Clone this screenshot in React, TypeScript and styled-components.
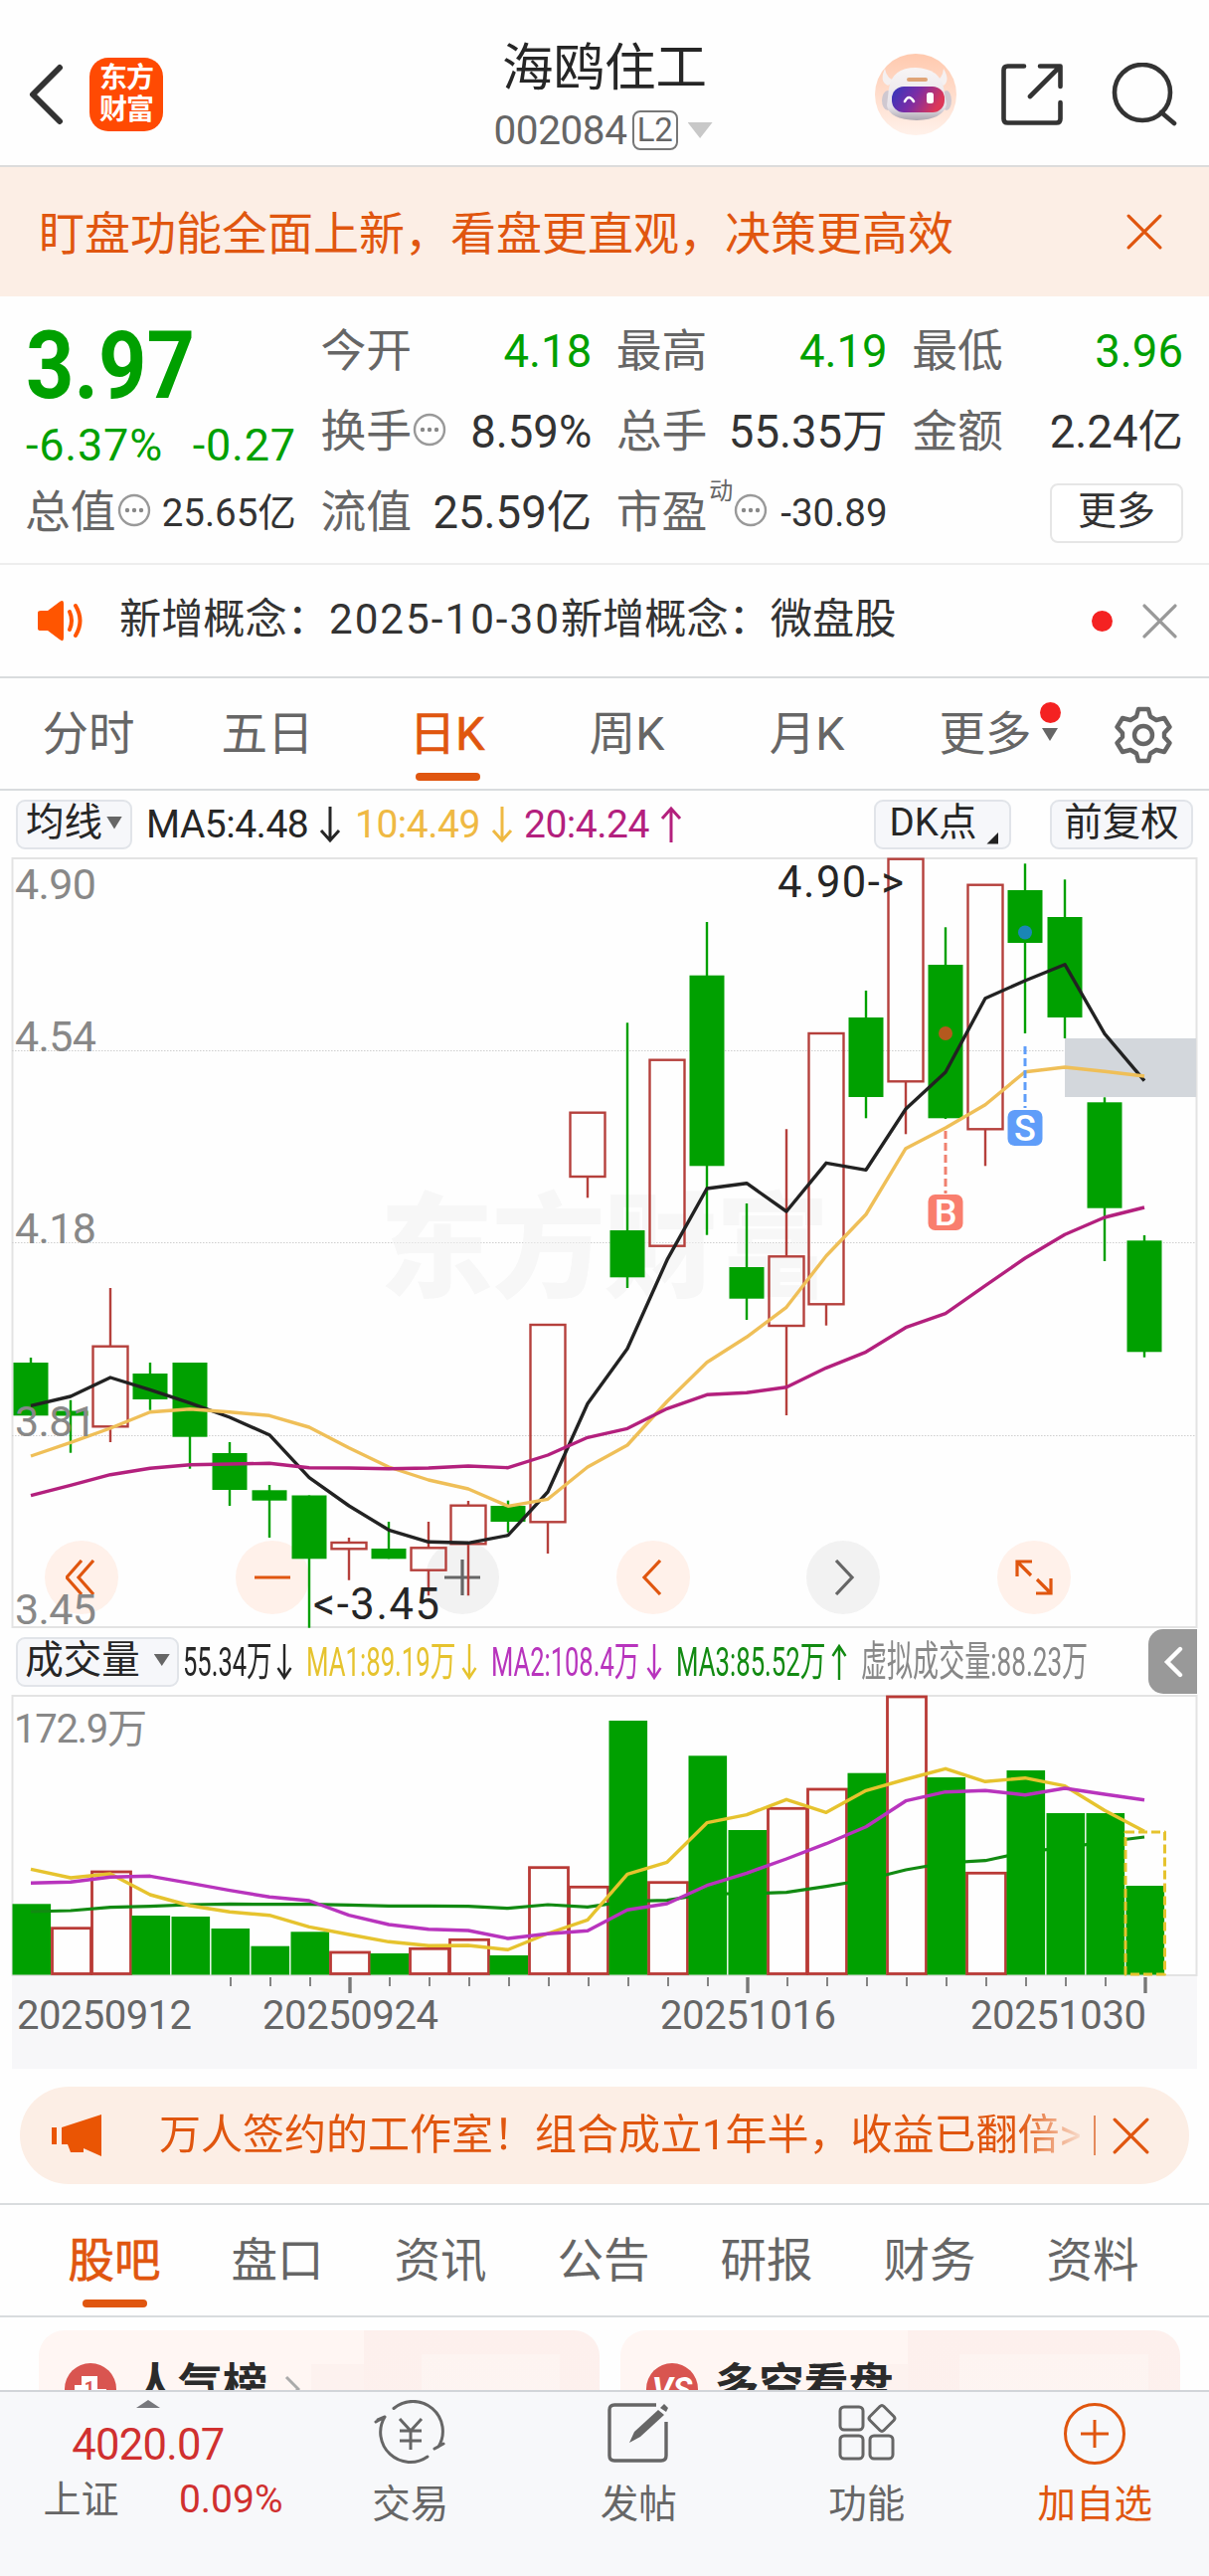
import React from 'react';
import styled, { createGlobalStyle, css } from 'styled-components';

const ORANGE = '#e0560f';
const GREEN = '#00a000';
const RED = '#b5403c';
const FONT = `Roboto, "Noto Sans CJK SC", sans-serif`;

const GlobalStyle = createGlobalStyle`
  *, *::before, *::after { box-sizing: border-box; }
  body { margin: 0; background: #fff; }
`;

const Page = styled.div`
  width: 1216px;
  height: 2590px;
  overflow: hidden;
  display: flex;
  flex-direction: column;
  background: #fefefe;
  font-family: ${FONT};
  color: #333;
  white-space: nowrap;
  > * { flex-shrink: 0; }
`;

/* ---------- header ---------- */
const Header = styled.header`
  height: 168px;
  display: grid;
  grid-template-columns: 400px 416px 400px;
  border-bottom: 2px solid #dcdcdc;
`;
const HeaderLeft = styled.div`
  display: flex;
  align-items: center;
  gap: 26px;
  padding: 24px 0 0 28px;
`;
const Logo = styled.div`
  width: 74px;
  height: 74px;
  border-radius: 19px;
  background: #ff4a03;
  color: #fff;
  display: flex;
  flex-direction: column;
  align-items: center;
  justify-content: center;
  font-size: 28px;
  font-weight: 700;
  line-height: 32px;
  letter-spacing: -1px;
`;
const HeaderTitle = styled.div`
  display: flex;
  flex-direction: column;
  align-items: center;
  padding-top: 38px;
`;
const StockName = styled.div`
  font-size: 51.5px;
  line-height: 62px;
  color: #262626;
`;
const CodeRow = styled.div`
  display: flex;
  align-items: center;
  height: 62px;
  font-size: 40.5px;
  letter-spacing: -0.4px;
  margin-left: -3px;
  color: #666;
`;
const LevelTag = styled.span`
  width: 46px;
  height: 40px;
  margin: 0 10px 0 5px;
  border: 2px solid #777;
  border-radius: 8px;
  font-size: 33px;
  line-height: 36px;
  text-align: center;
`;
const HeaderRight = styled.div`
  display: flex;
  align-items: center;
  justify-content: flex-end;
  padding: 24px 32px 0 0;
`;
const Triangle = styled.span<{ $w: number; $h: number; $color: string; $up?: boolean }>`
  display: inline-block;
  width: ${(p) => p.$w}px;
  height: ${(p) => p.$h}px;
  background: ${(p) => p.$color};
  clip-path: ${(p) => (p.$up ? 'polygon(50% 0, 100% 100%, 0 100%)' : 'polygon(0 0, 100% 0, 50% 100%)')};
`;

/* ---------- promo banner ---------- */
const Banner = styled.div`
  height: 130px;
  display: flex;
  align-items: center;
  justify-content: space-between;
  padding: 0 47px 0 39px;
  background: #fceee5;
  color: ${ORANGE};
  font-size: 46px;
  > span { padding-bottom: 4px; }
`;

/* ---------- quote ---------- */
const Quote = styled.section`
  height: 270px;
  padding: 15px 26px 0 28px;
  display: grid;
  grid-template-columns: repeat(4, 1fr);
  grid-template-rows: repeat(3, 81px);
  column-gap: 27.5px;
  border-bottom: 2px solid #ededed;
`;
const PriceBlock = styled.div`
  grid-row: span 2;
  margin-left: -2px;
  color: ${GREEN};
`;
const Price = styled.div`
  height: 107px;
  line-height: 109px;
  font-size: 95px;
  font-weight: 700;
  transform: scaleX(0.89);
  transform-origin: left;
`;
const Change = styled.div`
  display: flex;
  justify-content: space-between;
  height: 56px;
  line-height: 56px;
  font-size: 45px;
  letter-spacing: 0.8px;
`;
const Cell = styled.div`
  display: flex;
  align-items: center;
  height: 81px;
  line-height: 60px;
`;
const CellLabel = styled.span`
  margin-left: -3px;
  font-size: 45.8px;
  color: #666;
`;
const Sup = styled.sup`
  align-self: flex-start;
  margin: 3px 0 0 2px;
  font-size: 24px;
  line-height: 32px;
  color: #666;
`;
const CellValue = styled.span<{ $tone?: string; $small?: boolean }>`
  margin-left: auto;
  font-size: ${(p) => (p.$small ? 38.5 : 45.5)}px;
  color: ${(p) => p.$tone || '#333'};
`;
const MoreButton = styled.button`
  margin: 0 0 0 auto;
  padding: 0 0 4px;
  width: 134px;
  height: 60px;
  border: 2px solid #e6e6e6;
  border-radius: 8px;
  background: #fff;
  font: 39px ${FONT};
  line-height: 50px;
  color: #333;
`;

/* ---------- news strip ---------- */
const News = styled.div`
  height: 114px;
  display: flex;
  align-items: center;
  padding: 0 32px 0 36px;
  border-bottom: 2px solid #d9dcde;
`;
const NewsText = styled.div`
  flex: 1;
  margin-left: 34px;
  font-size: 42.2px;
  line-height: 60px;
  padding-bottom: 2px;
`;
const DateText = styled.span`
  letter-spacing: 2px;
`;
const Dot = styled.i<{ $size: number; $gap?: number }>`
  width: ${(p) => p.$size}px;
  height: ${(p) => p.$size}px;
  margin-right: ${(p) => p.$gap || 0}px;
  border-radius: 50%;
  background: #f42222;
`;

/* ---------- tabs ---------- */
const Tabs = styled.nav<{ $pad: number; $topLine?: boolean }>`
  height: ${(p) => (p.$topLine ? 115 : 113)}px;
  display: flex;
  padding: 0 ${(p) => p.$pad}px;
  border-top: ${(p) => (p.$topLine ? '2px solid #d9dcde' : '0')};
  border-bottom: 2px solid #d9dcde;
`;
const Tab = styled.div<{ $w: number; $active?: boolean }>`
  position: relative;
  width: ${(p) => p.$w}px;
  height: 111px;
  line-height: 111px;
  padding: 1px 2px 0 0;
  text-align: center;
  font-size: 46.5px;
  color: ${(p) => (p.$active ? ORANGE : '#666')};
  ${(p) =>
    p.$active &&
    css`
      -webkit-text-stroke: 0.7px ${ORANGE};
      &::after {
        content: '';
        position: absolute;
        left: calc(50% - 33px);
        bottom: 8px;
        width: 65px;
        height: 8px;
        border-radius: 4px;
        background: ${ORANGE};
      }
    `}
`;
const TabBadge = styled.span`
  position: absolute;
  left: 142px;
  top: 24px;
  width: 22px;
  display: flex;
  flex-direction: column;
  align-items: center;
  gap: 5px;
`;
const TabIcon = styled.div`
  flex: 1;
  display: flex;
  align-items: center;
  padding: 2px 0 0 40px;
`;

/* ---------- indicator toolbars ---------- */
const ToolRow = styled.div<{ $h: number }>`
  height: ${(p) => p.$h}px;
  display: flex;
  align-items: center;
  padding: 0 16px 0 16px;
`;
const Chip = styled.button<{ $w: number; $mr?: number; $gap?: number }>`
  display: flex;
  align-items: center;
  gap: ${(p) => p.$gap ?? 4}px;
  width: ${(p) => p.$w}px;
  height: 50px;
  margin: 0 ${(p) => p.$mr || 0}px 0 0;
  padding: 0 0 3px;
  justify-content: center;
  border: 2px solid #e1e4e9;
  border-radius: 9px;
  background: #f6f7fa;
  font: 38.5px/44px ${FONT};
  color: #262626;
`;
const CornerMark = styled.i`
  align-self: flex-end;
  width: 12px;
  height: 12px;
  margin: 0 -3px 0 6px;
  background: #222;
  clip-path: polygon(100% 0, 100% 100%, 0 100%);
`;
const MaItem = styled.div<{ $w: number; $color: string }>`
  width: ${(p) => p.$w}px;
  display: flex;
  align-items: center;
  gap: 11px;
  font-size: 39px;
  letter-spacing: -0.5px;
  color: ${(p) => p.$color};
`;
const Spacer = styled.div`
  flex: 1;
`;
const VolItem = styled.div<{ $w: number; $text: number; $color: string }>`
  width: ${(p) => p.$w}px;
  display: grid;
  grid-template-columns: ${(p) => p.$text}px 18px;
  column-gap: 6px;
  align-items: center;
  color: ${(p) => p.$color};
`;
const Narrow = styled.span<{ $k?: number }>`
  font-size: 41.5px;
  line-height: 50px;
  transform: scaleX(${(p) => p.$k ?? 0.615});
  transform-origin: left;
`;
const Drawer = styled.div`
  align-self: stretch;
  width: 49px;
  margin: 1px -4px 1px auto;
  display: flex;
  align-items: center;
  justify-content: center;
  border-radius: 15px 0 0 15px;
  background: #999;
`;

/* ---------- charts ---------- */
const ChartBox = styled.div<{ $h: number }>`
  position: relative;
  height: ${(p) => p.$h}px;
`;
const ChartSvg = styled.svg`
  position: relative;
  display: block;
  pointer-events: none;
`;
const Controls = styled.div`
  position: absolute;
  left: 45px;
  bottom: 14px;
  display: flex;
  gap: 117.5px;
`;
const Round = styled.button<{ $gray?: boolean }>`
  width: 74px;
  height: 74px;
  padding: 0;
  border: 0;
  border-radius: 50%;
  display: flex;
  align-items: center;
  justify-content: center;
  background: ${(p) => (p.$gray ? '#f2f2f2' : '#fff1ea')};
`;

/* ---------- ad ---------- */
const Ad = styled.div`
  height: 98px;
  margin: 19px 20px;
  padding: 0 40px 0 31px;
  display: flex;
  align-items: center;
  border-radius: 49px;
  background: #fceee5;
  color: ${ORANGE};
`;
const AdText = styled.div`
  flex: 1;
  margin-left: 57px;
  padding-bottom: 1px;
  font-size: 42px;
  line-height: 60px;
  mask-image: linear-gradient(90deg, #000 865px, rgba(0, 0, 0, 0.14) 925px);
`;
const Divider = styled.i`
  width: 2px;
  height: 40px;
  margin: 0 17px 0 6px;
  background: #e58a5c;
`;

/* ---------- cards ---------- */
const Cards = styled.section`
  height: 73px;
  padding: 13px 29px 0 39px;
  display: flex;
  gap: 21px;
  overflow: hidden;
`;
const Card = styled.div<{ $split: number; $box: number; $boxWidth: number }>`
  width: 564px;
  height: 160px;
  padding: 28px 26px 0;
  display: flex;
  align-items: flex-start;
  border-radius: 26px;
  background:
    linear-gradient(#fdf4f1, #fef6f4) ${(p) => p.$box}px 24px / ${(p) => p.$boxWidth}px 140px no-repeat,
    linear-gradient(#fdf0ed, #fdf1ee) ${(p) => p.$split}px 0 / 300px 160px no-repeat,
    linear-gradient(#fdf2ef, #fdf2ef) ${(p) => p.$split - 53}px 34px / 60px 140px no-repeat,
    #fff6f3;
`;
const CardTitle = styled.div`
  margin: -3px 14px 0 17px;
  font-size: 45px;
  line-height: 62px;
  font-weight: 700;
  color: #2b2b2b;
`;
const CardIcon = styled.svg`
  margin-top: 5px;
`;
const CardChevron = styled.svg`
  margin: 17px 0 0 3px;
`;

/* ---------- bottom bar ---------- */
const BottomBar = styled.footer`
  height: 187px;
  display: grid;
  grid-template-columns: 298px repeat(4, 229.5px);
  border-top: 2px solid #d2d5d9;
  background: #f7f8fa;
`;
const IndexBlock = styled.div`
  display: flex;
  flex-direction: column;
  align-items: center;
  padding-top: 8px;
  color: #d0302f;
`;
const IndexValue = styled.div`
  font-size: 43.5px;
  letter-spacing: -0.7px;
  line-height: 56px;
  margin: 10px 0 2px;
`;
const IndexRow = styled.div`
  display: flex;
  justify-content: space-between;
  width: 241px;
  margin-left: 30px;
  font-size: 39px;
  line-height: 48px;
`;
const IndexName = styled.span`
  color: #666;
  font-size: 38px;
`;
const Action = styled.div<{ $on?: boolean }>`
  display: flex;
  flex-direction: column;
  align-items: center;
  padding-top: 8px;
  gap: 11px;
  font-size: 38.5px;
  line-height: 56px;
  color: ${(p) => (p.$on ? ORANGE : '#666')};
`;

/* ---------- data ---------- */
type Candle = [up: 0 | 1, high: number, top: number, bottom: number, low: number];
const candles: Candle[] = [
  [0, 1365, 1370, 1423.3, 1423.3],
  [0, 1407.7, 1418.5, 1423.5, 1460.7],
  [1, 1295, 1353.7, 1434.3, 1450],
  [0, 1370, 1381, 1407, 1417.7],
  [0, 1370, 1370, 1444.7, 1476.7],
  [0, 1450, 1461, 1498, 1514],
  [0, 1493, 1498.3, 1508.7, 1546],
  [0, 1503.5, 1503.5, 1567.3, 1636.7],
  [1, 1546, 1551, 1557.3, 1588.7],
  [0, 1530, 1557, 1567.3, 1567.3],
  [1, 1530, 1556.3, 1578.7, 1604.3],
  [1, 1509, 1513.7, 1552.3, 1604.3],
  [0, 1508.7, 1514, 1530, 1540.7],
  [1, 1332, 1332, 1530.3, 1562],
  [1, 1118.7, 1118.7, 1183, 1204.3],
  [0, 1028.3, 1237, 1284.3, 1295],
  [1, 1065.7, 1065.7, 1252.7, 1252.7],
  [0, 927, 980.7, 1172.3, 1241.7],
  [0, 1210, 1274, 1305.7, 1327],
  [1, 1135.3, 1263.3, 1333, 1423],
  [1, 1039, 1039, 1311.3, 1332.7],
  [0, 996, 1023, 1103, 1124.3],
  [1, 863.7, 863.7, 1087.3, 1140.3],
  [0, 932.3, 970, 1124.3, 1125],
  [1, 889.7, 889.7, 1135.3, 1172.3],
  [0, 868.3, 895, 948, 1039],
  [0, 884.3, 922, 1023, 1044],
  [0, 1103.3, 1108.3, 1214.7, 1268],
  [0, 1242, 1247.3, 1359.3, 1364.7],
];
const ma5 = [1413.3, 1404, 1385, 1397.3, 1410.7, 1425, 1442.7, 1485.7, 1514, 1538.3, 1550.3, 1551.3, 1543.7, 1500, 1411.3, 1356, 1266.7, 1195, 1189.7, 1218, 1169.3, 1176.3, 1115, 1078, 1003.7, 986, 969.7, 1039.3, 1086.7];
const ma10 = [1464, 1450.3, 1436, 1419.7, 1416.7, 1419.7, 1423.3, 1435, 1455.7, 1475, 1488, 1497, 1514.3, 1507.3, 1475, 1453, 1409, 1369.7, 1344.3, 1314.3, 1262.7, 1221, 1154.7, 1134, 1110.7, 1077.7, 1073, 1077.3, 1082];
const ma20 = [1503.7, 1493.3, 1482.7, 1476.3, 1472.7, 1472, 1471.3, 1475.7, 1476, 1476.7, 1476, 1474, 1475.7, 1463, 1445.3, 1436.3, 1416.3, 1402.3, 1400.3, 1394.7, 1375.3, 1359.3, 1334.7, 1320.7, 1292.7, 1265, 1241.3, 1224, 1214];
const volTops = [1914.3, 1938.7, 1882, 1926, 1927, 1939, 1956.7, 1942.3, 1963, 1964, 1959.3, 1950.3, 1966, 1877.7, 1897.3, 1730, 1892.7, 1765.3, 1840, 1818.3, 1799, 1782.7, 1706, 1787, 1883.3, 1780, 1823, 1823, 1896];
const volMa1 = [1879.3, 1888, 1884, 1905, 1916, 1922.3, 1925.7, 1937.3, 1945, 1952.3, 1956.3, 1956, 1960.3, 1944, 1930.3, 1884.3, 1872.3, 1832.7, 1824.7, 1809.3, 1822.3, 1800.3, 1789, 1778.3, 1791.3, 1787.7, 1795.7, 1820.3, 1841.3];
const volMa2 = [1893.3, 1892.3, 1887.3, 1886.3, 1893.3, 1900.7, 1907.3, 1911, 1925.7, 1935, 1939.7, 1941, 1949, 1944.3, 1941.3, 1920.3, 1914, 1895.7, 1883.3, 1869, 1853.7, 1836.7, 1810.7, 1801.7, 1800.3, 1804.7, 1798, 1804, 1809.7];
const volMa3 = [1922, 1921, 1917.7, 1916.7, 1915, 1914.3, 1914.7, 1914.7, 1915.3, 1916.3, 1916.3, 1916.7, 1918.7, 1915, 1917.3, 1911.7, 1910.7, 1904, 1904, 1902.7, 1896.7, 1890, 1880, 1873, 1870.7, 1862, 1857.7, 1852, 1847];

const cx = (i: number) => 31 + i * 40;
const line = (ys: number[]) => ys.map((y, i) => `${cx(i)},${y}`).join(' ');
const volUp = candles.map(([up], i) => i === 1 || up === 1);

/* ---------- icons ---------- */
const Cross = ({ size, color, w = 3.5 }: { size: number; color: string; w?: number }) => (
  <svg width={size} height={size} viewBox="0 0 34 34" fill="none" stroke={color} strokeWidth={w} strokeLinecap="round">
    <path d="M2 2L32 32M32 2L2 32" />
  </svg>
);
const InfoSvg = styled.svg`
  margin: -6px 0 0 1px;
`;
const Info = () => (
  <InfoSvg width="34" height="34" viewBox="0 0 34 34" fill="none" stroke="#999" strokeWidth="2.4">
    <circle cx="17" cy="17" r="15" />
    <g fill="#888" stroke="none">
      <circle cx="10" cy="17" r="2.2" />
      <circle cx="17" cy="17" r="2.2" />
      <circle cx="24" cy="17" r="2.2" />
    </g>
  </InfoSvg>
);
const Arrow = ({ up }: { up?: boolean }) => (
  <svg width="22" height="38" viewBox="0 0 22 38" fill="none" stroke="currentColor" strokeWidth="3">
    <path d={up ? 'M11 37V3M2 13L11 3L20 13' : 'M11 1V35M2 25L11 35L20 25'} />
  </svg>
);
const NarrowArrow = ({ up }: { up?: boolean }) => (
  <svg width="16" height="38" viewBox="0 0 16 38" fill="none" stroke="currentColor" strokeWidth="2.4">
    <path d={up ? 'M8 37V3M1.5 13L8 3L14.5 13' : 'M8 1V35M1.5 25L8 35L14.5 25'} />
  </svg>
);
const ShareSvg = styled.svg`
  margin: 0 48px 0 43px;
`;
const Robot = () => (
  <svg width="84" height="84" viewBox="0 0 84 84">
    <defs>
      <linearGradient id="halo" x1="0" y1="0" x2="0" y2="1">
        <stop offset="0" stopColor="#ffc9ae" />
        <stop offset="1" stopColor="#fff1ea" />
      </linearGradient>
      <linearGradient id="visor" x1="0" y1="0" x2="1" y2="0.3">
        <stop offset="0" stopColor="#3038bd" />
        <stop offset="0.5" stopColor="#7a2ca6" />
        <stop offset="1" stopColor="#dc3758" />
      </linearGradient>
      <linearGradient id="shell" x1="0" y1="0" x2="0" y2="1">
        <stop offset="0" stopColor="#f8f5f5" />
        <stop offset="0.75" stopColor="#e6e2e8" />
        <stop offset="1" stopColor="#aba6b0" />
      </linearGradient>
    </defs>
    <circle cx="42" cy="42" r="41" fill="url(#halo)" />
    <path d="M11 16Q5 29 14 33L22 28Q13 27 11 16ZM70 16Q77 28 70 33L61 28Q69 27 70 16Z" fill="#f5f0f0" />
    <ellipse cx="14" cy="48" rx="6" ry="10" fill="#cfc8d0" />
    <ellipse cx="73" cy="48" rx="5" ry="10" fill="#cfc8d0" />
    <path d="M15 36Q18 15 42 15Q66 16 70 35L73 52Q70 67 43 68Q15 67 13 53Z" fill="url(#shell)" />
    <rect x="33" y="25" width="21" height="4" rx="2" fill="#dfa477" />
    <rect x="18" y="34" width="53" height="26" rx="12" fill="url(#visor)" />
    <path d="M31 49Q35 41 40 49" fill="none" stroke="#fff" strokeWidth="2.6" strokeLinecap="round" />
    <rect x="53" y="40" width="7" height="11" rx="2.5" fill="#fff" />
  </svg>
);

/* ---------- chart drawings ---------- */
const KChart = () => (
  <ChartSvg width="1216" height="776" viewBox="0 862 1216 776" fontFamily={FONT}>
    <rect x="12.5" y="863" width="1191" height="773" fill="none" stroke="#e3e3e3" strokeWidth="2" />
    <g stroke="#cfcfcf" strokeWidth="1" strokeDasharray="1.5 1.5">
      <path d="M12 1056.5H1203M12 1249.5H1203M12 1443.5H1203" />
    </g>
    <text x="382" y="1295" fontSize="114" fontWeight="900" fill="#f0f0f0" fillOpacity="0.55" textLength="452">东方财富</text>
    <rect x="1071" y="1044" width="132" height="59" fill="#d3d7dc" />
    {candles.map(([up, high, top, bottom, low], i) =>
      up ? (
        <g key={i} fill="none" stroke={RED} strokeWidth="2.4">
          <path d={`M${cx(i)} ${high}V${top}M${cx(i)} ${bottom}V${low}`} />
          <rect x={cx(i) - 17.5} y={top} width="35" height={bottom - top} />
        </g>
      ) : (
        <g key={i} fill={GREEN} stroke="none">
          <rect x={cx(i) - 1.2} y={high} width="2.4" height={low - high} />
          <rect x={cx(i) - 17.5} y={top} width="35" height={bottom - top} />
        </g>
      ),
    )}
    <g fill="none" strokeWidth="3.4" strokeLinejoin="round">
      <polyline points={line(ma5)} stroke="#222" />
      <polyline points={line(ma10)} stroke="#efbf58" />
      <polyline points={line(ma20)} stroke="#b3207d" />
    </g>
    <circle cx="951" cy="1039" r="7" fill="#b4591e" />
    <circle cx="1031" cy="937.5" r="7" fill="#1a86b6" />
    <path d="M1031 1052V1114" stroke="#5f9df9" strokeWidth="3" strokeDasharray="8 4" />
    <path d="M951 1137V1200" stroke="#f0806f" strokeWidth="3" strokeDasharray="8 4" />
    <rect x="1013.5" y="1116" width="35" height="36" rx="7" fill="#5f9df9" />
    <rect x="933.5" y="1201" width="35" height="36" rx="7" fill="#f97e6e" />
    <g fill="#fff" fontSize="36" fontWeight="500" textAnchor="middle">
      <text x="1031" y="1147">S</text>
      <text x="951" y="1232">B</text>
    </g>
    <g fill="#888" fontSize="43">
      <text x="15" y="904" textLength="82">4.90</text>
      <text x="15" y="1057" textLength="82">4.54</text>
      <text x="15" y="1250" textLength="82">4.18</text>
      <text x="15" y="1444" textLength="82">3.81</text>
      <text x="15" y="1633" textLength="82">3.45</text>
    </g>
    <g fill="#262626" fontSize="43.5">
      <text x="782" y="902" textLength="127">4.90-&gt;</text>
      <text x="315" y="1628" textLength="127">&lt;-3.45</text>
    </g>
  </ChartSvg>
);

const bar = (i: number) => {
  const x = 12.5 + i * 40;
  const top = volTops[i];
  return volUp[i] ? (
    <rect key={i} x={x} y={top} width="39" height={1984.5 - top} fill="none" stroke="#b93a36" strokeWidth="2.8" />
  ) : (
    <rect key={i} x={x} y={top} width="38.6" height={1985.5 - top} fill={GREEN} />
  );
};

const VolumeChart = () => (
  <ChartSvg width="1216" height="376" viewBox="0 1704 1216 376" fontFamily={FONT}>
    <rect x="12" y="1987" width="1192" height="93" fill="#f7f7f9" />
    <rect x="12.5" y="1705" width="1191" height="281" fill="none" stroke="#e3e3e3" strokeWidth="2" />
    <text x="14" y="1752" fontSize="40" fill="#888" textLength="134">172.9万</text>
    {volTops.map((_, i) => (i > 14 && !volUp[i] ? null : bar(i)))}
    <polyline points={line(volMa3)} fill="none" stroke="#128a12" strokeWidth="3.2" />
    {volTops.map((_, i) => (i > 14 && !volUp[i] ? bar(i) : null))}
    <g fill="none" strokeWidth="3.4" strokeLinejoin="round">
      <polyline points={line(volMa1)} stroke="#e6c32e" />
      <polyline points={line(volMa2)} stroke="#b834bd" />
      <rect x="1132" y="1842" width="39.5" height="143" stroke="#e6c32e" strokeWidth="3" strokeDasharray="9 4" />
    </g>
    {Array.from({ length: 24 }, (_, k) => k + 5).map((i) => {
      const major = i % 10 === 8;
      return <path key={i} d={`M${cx(i) + 1} 1988V${major ? 2004 : 1997}`} stroke="#777" strokeWidth={major ? 3.4 : 1.8} />;
    })}
    <g fill="#666" fontSize="40">
      <text x="17" y="2040" textLength="176">20250912</text>
      <text x="264" y="2040" textLength="177">20250924</text>
      <text x="664" y="2040" textLength="177">20251016</text>
      <text x="976" y="2040" textLength="177">20251030</text>
    </g>
  </ChartSvg>
);

const stroke = { fill: 'none', strokeWidth: 3.2, strokeLinecap: 'butt' as const };
const tabs = ['股吧', '盘口', '资讯', '公告', '研报', '财务', '资料'];

export default function App() {
  return (
    <Page>
      <GlobalStyle />
      <Header>
        <HeaderLeft>
          <svg width="36" height="62" viewBox="0 0 36 62" fill="none" stroke="#333" strokeWidth="6" strokeLinecap="round" strokeLinejoin="round">
            <path d="M32 4L5 31L32 58" />
          </svg>
          <Logo>
            <span>东方</span>
            <span>财富</span>
          </Logo>
        </HeaderLeft>
        <HeaderTitle>
          <StockName>海鸥住工</StockName>
          <CodeRow>
            002084<LevelTag>L2</LevelTag>
            <Triangle $w={25} $h={16} $color="#c8c8c8" />
          </CodeRow>
        </HeaderTitle>
        <HeaderRight>
          <Robot />
          <ShareSvg width="64" height="64" viewBox="0 0 64 64" fill="none" stroke="#333" strokeWidth="4.6" strokeLinecap="round" strokeLinejoin="round">
            <path d="M24 3.500H7.500Q3.500 3.500 3.500 7.500V56.500Q3.500 60.500 7.500 60.500H56.500Q60.500 60.500 60.500 56.500V40M40 3.500H60.500V24M60 4L30 34" />
          </ShareSvg>
          <svg width="66" height="64" viewBox="0 0 66 64" fill="none" stroke="#333" strokeWidth="4.6" strokeLinecap="round">
            <circle cx="31" cy="29" r="28" style={{ transform: 'translateY(1px)' }} />
            <path d="M50 50L63 61" />
          </svg>
        </HeaderRight>
      </Header>

      <Banner>
        <span>盯盘功能全面上新，看盘更直观，决策更高效</span>
        <Cross size={36} color={ORANGE} w={3} />
      </Banner>

      <Quote>
        <PriceBlock>
          <Price>3.97</Price>
          <Change>
            <span>-6.37%</span>
            <span>-0.27</span>
          </Change>
        </PriceBlock>
        <Cell><CellLabel>今开</CellLabel><CellValue $tone={GREEN}>4.18</CellValue></Cell>
        <Cell><CellLabel>最高</CellLabel><CellValue $tone={GREEN}>4.19</CellValue></Cell>
        <Cell><CellLabel>最低</CellLabel><CellValue $tone={GREEN}>3.96</CellValue></Cell>
        <Cell><CellLabel>换手</CellLabel><Info /><CellValue>8.59%</CellValue></Cell>
        <Cell><CellLabel>总手</CellLabel><CellValue>55.35万</CellValue></Cell>
        <Cell><CellLabel>金额</CellLabel><CellValue>2.24亿</CellValue></Cell>
        <Cell><CellLabel>总值</CellLabel><Info /><CellValue $small>25.65亿</CellValue></Cell>
        <Cell><CellLabel>流值</CellLabel><CellValue>25.59亿</CellValue></Cell>
        <Cell><CellLabel>市盈</CellLabel><Sup>动</Sup><Info /><CellValue $small>-30.89</CellValue></Cell>
        <Cell><MoreButton>更多</MoreButton></Cell>
      </Quote>

      <News>
        <svg width="50" height="44" viewBox="0 0 50 44">
          <path d="M2 14Q2 12 5 12H12L24 3Q28 0 28 5V39Q28 44 24 41L12 32H5Q2 32 2 30Z" fill="#ff5500" />
          <path d="M34 13Q38 22 34 31M40 7Q49 22 40 37" fill="none" stroke="#ff5500" strokeWidth="4" strokeLinecap="round" />
        </svg>
        <NewsText>
          新增概念：<DateText>2025-10-30</DateText>新增概念：微盘股
        </NewsText>
        <Dot $size={21} $gap={30} />
        <Cross size={35} color="#999" w={3.2} />
      </News>

      <Tabs $pad={0}>
        <Tab $w={180}>分时</Tab>
        <Tab $w={180}>五日</Tab>
        <Tab $w={181} $active>日K</Tab>
        <Tab $w={181}>周K</Tab>
        <Tab $w={181}>月K</Tab>
        <Tab $w={178}>
          更多
          <TabBadge>
            <Dot $size={21} />
            <Triangle $w={16} $h={13} $color="#666" />
          </TabBadge>
        </Tab>
        <TabIcon>
          <svg width="58" height="58" viewBox="0 0 58 58" fill="none" stroke="#666" strokeWidth="4.4" strokeLinejoin="round">
            <path d="M24 3H34L36 10.500L42 14L50 12L55.500 21L50 27V31L55.500 37L50 46L42 44L36 47.500L34 55H24L22 47.500L16 44L8 46L2.500 37L8 31V27L2.500 21L8 12L16 14L22 10.500Z" />
            <circle cx="29" cy="29" r="9" />
          </svg>
        </TabIcon>
      </Tabs>

      <ToolRow $h={67}>
        <Chip $w={117} $mr={14}>
          均线
          <Triangle $w={16} $h={13} $color="#666" />
        </Chip>
        <MaItem $w={210} $color="#262626">MA5:4.48<Arrow /></MaItem>
        <MaItem $w={170} $color="#efb943">10:4.49<Arrow /></MaItem>
        <MaItem $w={170} $color="#b3207d">20:4.24<Arrow up /></MaItem>
        <Spacer />
        <Chip $w={138} $mr={39}>
          DK点
          <CornerMark />
        </Chip>
        <Chip $w={144}>前复权</Chip>
      </ToolRow>

      <ChartBox $h={775}>
        <Controls>
          <Round>
            <svg width="32" height="36" viewBox="0 0 32 36" stroke={ORANGE} {...stroke}><path d="M16 1L1 18L16 35M28 1L13 18L28 35" /></svg>
          </Round>
          <Round>
            <svg width="36" height="36" viewBox="0 0 36 36" stroke={ORANGE} {...stroke}><path d="M0 18H36" /></svg>
          </Round>
          <Round $gray>
            <svg width="36" height="36" viewBox="0 0 36 36" stroke="#666" {...stroke}><path d="M0 18H36M18 0V36" /></svg>
          </Round>
          <Round>
            <svg width="24" height="36" viewBox="0 0 24 36" stroke={ORANGE} {...stroke}><path d="M19 1L3 18L19 35" /></svg>
          </Round>
          <Round $gray>
            <svg width="24" height="36" viewBox="0 0 24 36" stroke="#666" {...stroke}><path d="M5 1L21 18L5 35" /></svg>
          </Round>
          <Round>
            <svg width="38" height="38" viewBox="0 0 38 38" stroke={ORANGE} {...stroke}>
              <path d="M2 18V3H17M2.500 3.500L16 17M36 20V35H21M35.500 34.500L22 21" />
            </svg>
          </Round>
        </Controls>
        <KChart />
      </ChartBox>

      <ToolRow $h={67}>
        <Chip $w={164} $mr={4} $gap={14}>
          成交量
          <Triangle $w={16} $h={12} $color="#666" />
        </Chip>
        <VolItem $w={124} $text={88} $color="#262626"><Narrow>55.34万</Narrow><NarrowArrow /></VolItem>
        <VolItem $w={186} $text={150} $color="#e6c32e"><Narrow $k={0.62}>MA1:89.19万</Narrow><NarrowArrow /></VolItem>
        <VolItem $w={186} $text={150} $color="#b834bd"><Narrow>MA2:108.4万</Narrow><NarrowArrow /></VolItem>
        <VolItem $w={186} $text={150} $color="#128a12"><Narrow $k={0.62}>MA3:85.52万</Narrow><NarrowArrow up /></VolItem>
        <VolItem $w={228} $text={226} $color="#888"><Narrow $k={0.628}>虚拟成交量:88.23万</Narrow></VolItem>
        <Drawer>
          <svg width="20" height="32" viewBox="0 0 20 32" fill="none" stroke="#fff" strokeWidth="4.4" strokeLinecap="round"><path d="M17 3L4 16L17 29" /></svg>
        </Drawer>
      </ToolRow>

      <ChartBox $h={375}>
        <VolumeChart />
      </ChartBox>

      <Ad>
        <svg width="52" height="44" viewBox="0 0 52 44" fill="#ea5504">
          <path d="M1 14H6V31H1ZM11 14L51 1V43L33 35V39H20L17 31H11Z" />
        </svg>
        <AdText>万人签约的工作室！组合成立1年半，收益已翻倍&gt;</AdText>
        <Divider />
        <Cross size={37} color={ORANGE} w={3} />
      </Ad>

      <Tabs $pad={34} $topLine>
        {tabs.map((t, i) => (
          <Tab key={t} $w={164} $active={i === 0}>{t}</Tab>
        ))}
      </Tabs>

      <Cards>
        <Card $split={327} $box={385} $boxWidth={139}>
          <CardIcon width="52" height="52" viewBox="0 0 52 52">
            <circle cx="26" cy="26" r="26" fill="#d95550" />
            <path d="M10 22H17V13H33V26H42V40H10Z" fill="#fff" />
            <text x="25" y="31" fontSize="18" fontWeight="700" textAnchor="middle" fill="#d95550" fontFamily={FONT}>1</text>
          </CardIcon>
          <CardTitle>人气榜</CardTitle>
          <CardChevron width="16" height="28" viewBox="0 0 16 28" fill="none" stroke="#aaa" strokeWidth="3"><path d="M2 2L14 14L2 26" /></CardChevron>
        </Card>
        <Card $split={289} $box={341} $boxWidth={190}>
          <CardIcon width="52" height="52" viewBox="0 0 52 52">
            <circle cx="26" cy="26" r="26" fill="#d95550" />
            <text x="26" y="38" fontSize="33" fontWeight="700" fontStyle="italic" textAnchor="middle" fill="#fff" fontFamily={FONT}>VS</text>
          </CardIcon>
          <CardTitle>多空看盘</CardTitle>
        </Card>
      </Cards>

      <BottomBar>
        <IndexBlock>
          <Triangle $w={24} $h={8} $color="#77787c" $up />
          <IndexValue>4020.07</IndexValue>
          <IndexRow>
            <IndexName>上证</IndexName>
            <span>0.09%</span>
          </IndexRow>
        </IndexBlock>
        <Action>
          <svg width="74" height="66" viewBox="0 0 74 66" fill="none" stroke="currentColor" strokeWidth="3" strokeLinecap="round" strokeLinejoin="round">
            <path d="M20 8.500A30 30 0 0 1 65 47L61 49L70 44M54 57A30 30 0 0 1 11 17L2 22M11 17L4 20" />
            <path d="M26 19L37 31L48 19M26 31H48M26 41H48M37 31V50" strokeLinecap="butt" />
          </svg>
          交易
        </Action>
        <Action>
          <svg width="64" height="66" viewBox="0 0 64 66" fill="none" stroke="currentColor" strokeWidth="3.4">
            <path d="M50 5H8Q3 5 3 10V56Q3 61 8 61H55Q60 61 60 56V22" />
            <path d="M52 10L58 15L34 37L23 43L28 32Z" fill="currentColor" stroke="none" />
            <path d="M54 8L58 4L62 8L60 12Z" fill="currentColor" stroke="none" />
          </svg>
          发帖
        </Action>
        <Action>
          <svg width="60" height="66" viewBox="0 0 60 66" fill="none" stroke="currentColor" strokeWidth="3">
            <rect x="3" y="7" width="23" height="23" rx="4" />
            <rect x="3" y="36" width="23" height="23" rx="4" />
            <rect x="33" y="36" width="23" height="23" rx="4" />
            <path d="M43 6.500Q45 4.500 47 6.500L57 16.500Q59 18.500 57 20.500L47 30.500Q45 32.500 43 30.500L33 20.500Q31 18.500 33 16.500Z" />
          </svg>
          功能
        </Action>
        <Action $on>
          <svg width="66" height="66" viewBox="0 0 66 66" fill="none" stroke="currentColor" strokeWidth="3">
            <circle cx="33" cy="34" r="29.500" />
            <path d="M19 34H47M33 20V48" />
          </svg>
          加自选
        </Action>
      </BottomBar>
    </Page>
  );
}
